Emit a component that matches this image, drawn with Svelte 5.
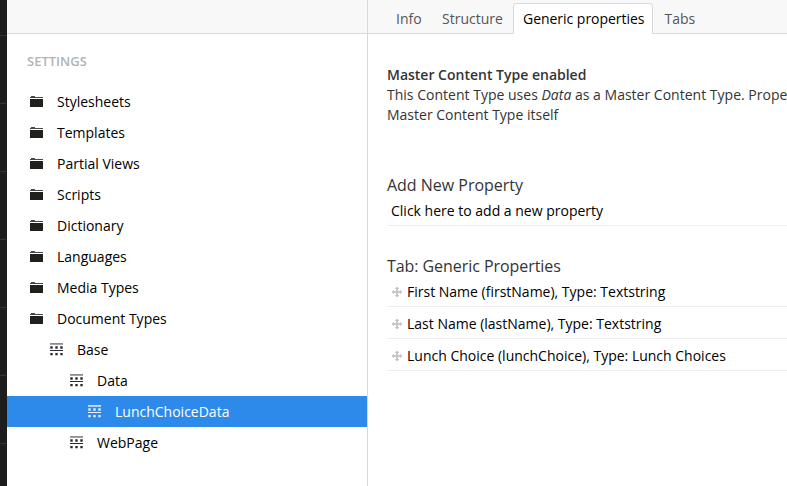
<script>
  const tree = [
    { name: 'Stylesheets', folder: true },
    { name: 'Templates', folder: true },
    { name: 'Partial Views', folder: true },
    { name: 'Scripts', folder: true },
    { name: 'Dictionary', folder: true },
    { name: 'Languages', folder: true },
    { name: 'Media Types', folder: true },
    { name: 'Document Types', folder: true },
    { name: 'Base', indent: 20 },
    { name: 'Data', indent: 40 },
    { name: 'LunchChoiceData', indent: 58, active: true },
    { name: 'WebPage', indent: 40 }
  ];
  const properties = [
    'First Name (firstName), Type: Textstring',
    'Last Name (lastName), Type: Textstring',
    'Lunch Choice (lunchChoice), Type: Lunch Choices'
  ];
  const railItems = [0, 1, 2, 3, 4, 5, 6];
</script>

<div class="app">
  <div class="rail">
    {#each railItems as item (item)}<div class="rail-item"></div>{/each}
  </div>

  <aside>
    <div class="bar"></div>
    <h5>SETTINGS</h5>
    <ul class="tree">
      {#each tree as node (node.name)}
        <li class:active={node.active} style="padding-left: {23 + (node.indent ?? 0)}px">
          {#if node.folder}
            <svg width="13" height="11" viewBox="0 0 13 11" shape-rendering="crispEdges">
              <path d="M1 0h4v1h8v1H0V1h1z" fill="#484846" />
              <path d="M0 3h13v8H0z" fill="#21201c" />
            </svg>
          {:else}
            <svg class="doc" width="13" height="13" viewBox="0 0 13 13">
              <path class="soft" d="M0 0h13v1.8H0z" />
              <path class="ink" d="M.3 3.3h2.4v2.5H.3zM5.3 3.3h2.4v2.5H5.3zM10.3 3.3h2.4v2.5h-2.4zM0 7h13v1.1H0zM.3 10h2.4v2.2H.3zM5.3 10h2.4v2.2H5.3zM10.3 10h2.4v2.2h-2.4z" />
            </svg>
          {/if}
          <span>{node.name}</span>
        </li>
      {/each}
    </ul>
  </aside>

  <main>
    <nav>
      <a class="info">Info</a>
      <a class="structure">Structure</a>
      <a class="current">Generic properties</a>
      <a class="tabs">Tabs</a>
    </nav>
    <div class="content">
      <p><strong>Master Content Type enabled</strong><br />
        <span class="line">This Content Type uses <em>Data</em> as a Master Content Type. Prope</span><br />
        Master Content Type itself</p>
      <h4>Add New Property</h4>
      <div class="add">Click here to add a new property</div>
      <h4 class="second">Tab: Generic Properties</h4>
      <ul class="props">
        {#each properties as property (property)}
          <li>
            <svg width="10" height="10" viewBox="0 0 10 10">
              <path d="M4 0h2v4h4v2H6v4H4V6H0V4h4zM3 1h4v1H3zM3 8h4v1H3zM1 3h1v4H1zM8 3h1v4H8z" fill="#c9c9c9" />
            </svg>
            <span>{property}</span>
          </li>
        {/each}
      </ul>
    </div>
  </main>
</div>

<style>
  .app {
    display: flex;
    width: 787px;
    height: 486px;
    overflow: hidden;
    background: #fff;
    color: #000;
    font: 14px/20px 'Open Sans', 'Noto Sans', sans-serif;
  }
  .rail { width: 7px; flex: none; background: #1d1d1d; box-sizing: border-box; overflow: hidden; }
  .rail-item { height: 68px; box-sizing: border-box; border-bottom: 1px solid #343434; }
  .rail-item:first-child { height: 36px; }
  aside { width: 360px; flex: none; border-right: 1px solid #d9d9d9; }
  .bar, nav { height: 34px; box-sizing: border-box; background: #f8f8f8; border-bottom: 1px solid #d9d9d9; }
  h5 { margin: 18px 0 15px 20px; font-size: 13px; line-height: 19px; font-weight: 600; color: #b3b3b3; }
  ul { list-style: none; margin: 0; padding: 0; }
  .tree li { height: 31px; box-sizing: border-box; display: flex; align-items: center; gap: 14px; white-space: nowrap; }
  .tree svg { flex: none; }
  .soft { fill: #8e8c91; }
  .ink { fill: #2b2930; }
  .active { background: #2e8aea; color: #fff; }
  .active .soft { fill: #c5e0fb; }
  .active .ink { fill: #e2effd; }
  main { flex: 1; min-width: 0; overflow: hidden; }
  nav { display: flex; padding-left: 16px; line-height: 20px; color: #555; white-space: nowrap; }
  nav a { box-sizing: border-box; padding: 9px 12px 0; flex: none; }
  .structure { width: 81px; margin-left: -1px; }
  .info { width: 47px; }
  .current {
    width: 140px; height: 31px; margin: 3px 0 0 2px; padding: 5px 0 0 9px;
    color: #000; background: #fff; border: 1px solid #d9d9d9; border-bottom: 0; border-radius: 4px 4px 0 0;
    letter-spacing: -0.03px;
  }
  nav .tabs { padding-left: 11.5px; }
  .content { padding: 31px 0 0 19px; white-space: nowrap; }
  p { margin: 0; color: #343434; }
  .line { letter-spacing: 0.01px; }
  strong { font-weight: 600; }
  h4 { margin: 50px 0 0; font-size: 16px; line-height: 20px; font-weight: 400; color: #343434; letter-spacing: -0.02px; }
  .add { height: 31px; box-sizing: border-box; padding: 6px 0 0 4px; border-bottom: 1px solid #eee; line-height: 20px; }
  h4.second { margin-top: 30px; letter-spacing: -0.06px; }
  .props li { height: 32px; box-sizing: border-box; display: flex; align-items: center; gap: 5px; padding: 3px 0 0 5px; border-bottom: 1px solid #eee; }
  .props li:first-child { height: 31px; padding-top: 2px; }
</style>
